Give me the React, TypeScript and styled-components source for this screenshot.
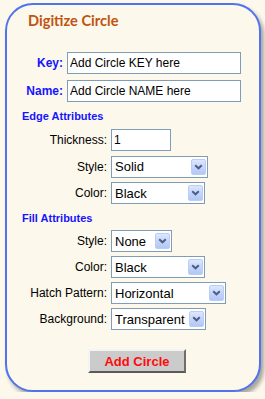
import React from "react";
import styled, { createGlobalStyle } from "styled-components";

const Global = createGlobalStyle`
  html, body { margin: 0; padding: 0; background: #fcf8ec; }
  body { font-family: "Liberation Sans", Arial, sans-serif; }
  * { box-sizing: border-box; }
`;

const Panel = styled.div`
  margin: 3px 0 0 5px;
  width: 256px;
  height: 389px;
  border: 2px solid #4f74ee;
  border-radius: 28px;
  background: #fcf8ec;
  box-shadow: 3px 4px 4px rgba(60, 60, 60, 0.45);
  padding: 7px 0 0 0;
  display: flex;
  flex-direction: column;
`;

const Title = styled.h1`
  margin: 0 0 0 21px;
  font-family: Lato, "Open Sans", sans-serif;
  font-weight: 700;
  font-size: 14.6px;
  line-height: 18px;
  color: #c0540f;
`;

const Rows = styled.div<{ $top: number; $gap: number }>`
  display: flex;
  flex-direction: column;
  gap: ${(p) => p.$gap}px;
  margin-top: ${(p) => p.$top}px;
`;

const Row = styled.div`
  display: flex;
  align-items: center;
  gap: 4px;
`;

const Label = styled.label<{ $w: number; $strong?: boolean }>`
  width: ${(p) => p.$w}px;
  text-align: right;
  font-size: 12px;
  font-weight: ${(p) => (p.$strong ? 700 : 400)};
  color: ${(p) => (p.$strong ? "#1414ff" : "#000")};
  white-space: nowrap;
`;

const Heading = styled.h2<{ $top: number }>`
  margin: ${(p) => p.$top}px 0 0 15px;
  font-size: 11px;
  line-height: 13px;
  font-weight: 700;
  color: #1414ff;
`;

const TextInput = styled.input<{ $w: number }>`
  width: ${(p) => p.$w}px;
  height: 22px;
  border: 1px solid #7f9db9;
  background: #fff;
  padding: 0 2px;
  font-family: "Liberation Sans", Arial, sans-serif;
  font-size: 12px;
  color: #000;
  outline: none;
`;

const SelectBox = styled.div<{ $w: number }>`
  position: relative;
  width: ${(p) => p.$w}px;
  height: 22px;
  border: 1px solid #7f9db9;
  background: #fff;
  display: flex;
  align-items: center;
`;

const NativeSelect = styled.select`
  appearance: none;
  -webkit-appearance: none;
  border: none;
  background: transparent;
  width: 100%;
  height: 100%;
  padding: 0 0 0 3px;
  font-family: "Liberation Sans", Arial, sans-serif;
  font-size: 13px;
  color: #000;
  outline: none;
`;

const ArrowBtn = styled.span`
  position: absolute;
  right: 1px;
  top: 2px;
  width: 15px;
  height: 16px;
  border: 1px solid #bccdf5;
  border-radius: 2px;
  background: linear-gradient(180deg, #dde7fd 0%, #c3d4fa 55%, #b3c7f7 100%);
  display: flex;
  align-items: center;
  justify-content: center;
  pointer-events: none;
`;

const ButtonRow = styled.div`
  display: flex;
  margin-top: 19px;
  padding-left: 81px;
`;

const Button = styled.button`
  width: 98px;
  height: 24px;
  background: #cbcbcb;
  border: 2px solid;
  border-color: #f4f4f4 #6d6d6d #5a5a5a #f4f4f4;
  color: #ff0a0a;
  font-family: "Liberation Sans", Arial, sans-serif;
  font-weight: 700;
  font-size: 13px;
  padding: 0;
`;

const Chevron = () => (
  <svg width="9" height="6" viewBox="0 0 9 6">
    <path d="M1.2 1.2 L4.5 4.3 L7.8 1.2" fill="none" stroke="#4d5f86" strokeWidth="2" />
  </svg>
);

const Select = ({ w, value }: { w: number; value: string }) => (
  <SelectBox $w={w}>
    <NativeSelect defaultValue={value}>
      <option>{value}</option>
    </NativeSelect>
    <ArrowBtn>
      <Chevron />
    </ArrowBtn>
  </SelectBox>
);

const LW = 100;

export default function App() {
  return (
    <>
      <Global />
      <Panel>
        <Title>Digitize Circle</Title>
        <Rows $top={22} $gap={6}>
          <Row>
            <Label $w={56} $strong>Key:</Label>
            <TextInput $w={174} defaultValue="Add Circle KEY here" />
          </Row>
          <Row>
            <Label $w={56} $strong>Name:</Label>
            <TextInput $w={174} defaultValue="Add Circle NAME here" />
          </Row>
        </Rows>
        <Heading $top={8}>Edge Attributes</Heading>
        <Rows $top={6} $gap={4.5}>
          <Row>
            <Label $w={LW}>Thickness:</Label>
            <TextInput $w={60} defaultValue="1" />
          </Row>
          <Row>
            <Label $w={LW}>Style:</Label>
            <Select w={97} value="Solid" />
          </Row>
          <Row>
            <Label $w={LW}>Color:</Label>
            <Select w={94} value="Black" />
          </Row>
        </Rows>
        <Heading $top={8}>Fill Attributes</Heading>
        <Rows $top={5} $gap={4}>
          <Row>
            <Label $w={LW}>Style:</Label>
            <Select w={61} value="None" />
          </Row>
          <Row>
            <Label $w={LW}>Color:</Label>
            <Select w={94} value="Black" />
          </Row>
          <Row>
            <Label $w={LW}>Hatch Pattern:</Label>
            <Select w={115} value="Horizontal" />
          </Row>
          <Row>
            <Label $w={LW}>Background:</Label>
            <Select w={95} value="Transparent" />
          </Row>
        </Rows>
        <ButtonRow>
          <Button>Add Circle</Button>
        </ButtonRow>
      </Panel>
    </>
  );
}
